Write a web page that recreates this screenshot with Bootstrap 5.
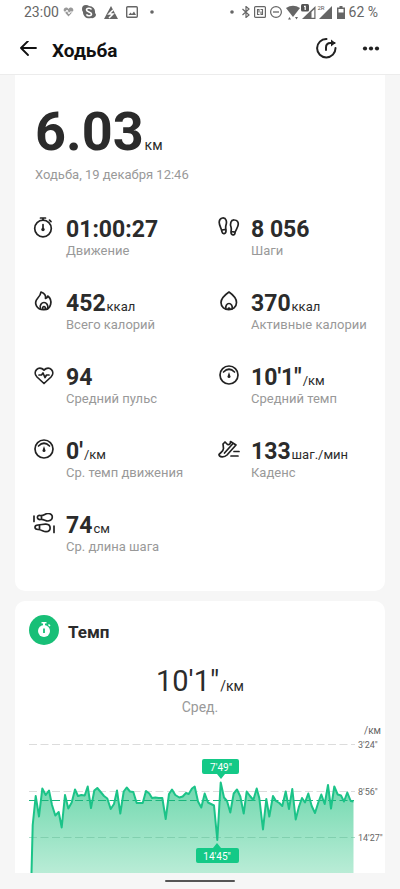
<!DOCTYPE html>
<html lang="ru">
<head>
<meta charset="utf-8">
<meta name="viewport" content="width=device-width, initial-scale=1">
<title>Ходьба</title>
<link href="https://cdn.jsdelivr.net/npm/bootstrap@5.3.0/dist/css/bootstrap.min.css" rel="stylesheet">
<style>
  body { font-family: Roboto, "Noto Sans", sans-serif; background: #f6f6f6; color: #2b2b2b; }
  svg { display: block; flex: none; }
  .line-art { fill: none; stroke: #222; stroke-width: 2; stroke-linecap: round; stroke-linejoin: round; }
  .line-fine { stroke-width: 1.7; }
  .app-top { border-bottom: 1px solid #ececec; }
  .status-bar { height: 24px; padding: 0 22px 0 24px; font-size: 14px; line-height: 24px; color: #666; }
  .title-bar { height: 50px; padding: 0 20px; }
  .title-bar h1 { font-size: 19px; line-height: 24px; padding-top: 4px; margin-left: 15px; color: #111; }
  .page-body { padding: 0 15px; }
  .panel-box { background: #fff; border-radius: 10px; }
  .panel-first { border-radius: 0 0 10px 10px; padding: 29px 0 4px; }
  .summary { padding: 0 20px; }
  .distance { font-size: 54px; line-height: 56px; }
  .distance small, .stat-value small, .pace-value small { font-weight: 400; line-height: 1; margin-left: 1px; }
  .distance small { font-size: 14px; }
  .stat-value small { font-size: 13px; }
  .muted { color: #999; font-size: 13px; line-height: 16px; }
  .summary .muted { padding-top: 7px; }
  .stats { padding-top: 34px; }
  .stat { padding-left: 18px; height: 74px; gap: 11px; }
  .stat-value { font-size: 23px; line-height: 26px; white-space: nowrap; }
  .panel-pace { margin-top: 10px; border-radius: 10px 10px 0 0; overflow: hidden; }
  .pace-head { padding: 14px 14px 0; gap: 9px; }
  .pace-head h2 { font-size: 17px; line-height: 24px; padding-top: 3px; }
  .badge-round { width: 30px; height: 30px; background: #18bf77; }
  .pace-value { font-size: 29px; line-height: 36px; padding-top: 18px; }
  .pace-value small { font-size: 14px; }
  .pace-sub { font-size: 14px; padding-bottom: 10px; }
  .chart text { font-size: 9px; fill: #666; }
  .chart .unit { font-size: 10px; }
  .chart .tip { font-size: 10px; fill: #fff; text-anchor: middle; }
  .home-area { height: 16px; }
  .home-bar { width: 70px; height: 2px; background: #555; }
</style>
<script src="https://cdn.jsdelivr.net/npm/bootstrap@5.3.0/dist/js/bootstrap.bundle.min.js"></script>
</head>
<body>
<header class="app-top bg-white">
  <div class="status-bar d-flex align-items-center justify-content-between">
    <div class="d-flex align-items-center gap-2">
      <div class="d-flex align-items-center gap-1"><span>23:00</span>
      <svg width="11" height="12" viewBox="0 0 11 12"><path d="M5.500 10.500 1 5.500C-.5 2 3.500 0 5.500 3 7.500 0 11.500 2 10 5.500z" fill="#999"/><path d="M0 6h3l1-2 2 4 1-2h4" fill="none" stroke="#fff"/></svg></div>
      <svg width="14" height="14" viewBox="0 0 14 14"><path d="M4 0Q6 0 7 1a6 6 0 0 1 6 7q1 1 1 2a4 4 0 0 1-5 3 6 6 0 0 1-8-6Q0 6 0 4a4 4 0 0 1 4-4z" fill="#666"/><path d="M9.500 4.500C8.500 2.500 4.500 3 4.500 5S9.500 7 9.500 9s-4 2.500-5 .3" fill="none" stroke="#fff" stroke-width="1.600"/></svg>
      <svg width="14" height="13" viewBox="0 0 14 13"><path d="M7 0 14 13H0z" fill="#666"/><path d="M9 4 5 8h4l-4 4" fill="none" stroke="#fff" stroke-width="1.500"/></svg>
      <svg width="12" height="12" viewBox="0 0 12 12"><rect x=".7" y=".7" width="10.600" height="10.600" rx="1" fill="none" stroke="#666" stroke-width="1.400"/><path d="M2.500 9 4.500 6.500 6 8l2-2.500L10 9z" fill="#666"/></svg>
      <svg class="ms-1" width="4" height="4" viewBox="0 0 4 4"><circle cx="2" cy="2" r="1.800" fill="#666"/></svg>
    </div>
    <div class="d-flex align-items-center gap-1">
      <svg class="me-1" width="4" height="4" viewBox="0 0 4 4"><circle cx="2" cy="2" r="1.800" fill="#666"/></svg>
      <svg width="8" height="12" viewBox="0 0 8 12"><path d="M.5 3 7 9 4 11.500V.5L7 3 .5 9" fill="none" stroke="#666" stroke-width="1.200"/></svg>
      <svg width="12" height="12" viewBox="0 0 12 12"><rect x=".6" y=".6" width="10.800" height="10.800" rx="1" fill="none" stroke="#666" stroke-width="1.200"/><path d="M5.500 8.500H3.500v-5h1.500v3M6.500 3.500h2v5H7V5.500" fill="none" stroke="#666" stroke-width="1.100"/></svg>
      <svg width="12" height="12" viewBox="0 0 12 12"><circle cx="6" cy="6" r="5.400" fill="none" stroke="#666" stroke-width="1.200"/><path d="M3 6h6" stroke="#666" stroke-width="1.300"/></svg>
      <svg width="47" height="18" viewBox="0 0 47 18"><path d="M0 5q7-4.500 14 0L7 14z" fill="#666"/><path d="M2 16.500 3.500 14 5 16.500zM9 14h3l-1.500 2.500z" fill="#666"/><path d="M16 16 29.500 3v13z" fill="#666"/><path d="M25.500 9 28.300 6.200v8.500h-2.800z" fill="#fff"/><rect x="15" y="1" width="8" height="7.500" rx="1.500" fill="#555"/><path d="M18 3.300h1.200V7" fill="none" stroke="#fff" stroke-width="1.200"/><path d="M33 16 46 3v13z" fill="#666"/><text x="31.500" y="6.500" font-size="6" fill="#555">2R</text></svg>
      <svg width="8" height="13" viewBox="0 0 8 13"><path d="M2.500 0h3v1.500H8V13H0V1.500h2.500z" fill="#666"/><path d="M1.500 3h5v3.500h-5z" fill="#fff"/></svg>
      <span>62 %</span>
    </div>
  </div>
  <div class="title-bar d-flex align-items-center">
    <button type="button" class="btn p-0 border-0" aria-label="Назад"><svg width="17" height="16" viewBox="0 0 17 16"><path d="M16 7H1.500M8 0 1 7l7 7" fill="none" stroke="#111" stroke-width="1.800" stroke-linecap="round" stroke-linejoin="round"/></svg></button>
    <h1 class="fw-bold mb-0 flex-grow-1">Ходьба</h1>
    <button type="button" class="btn p-0 border-0 me-4" aria-label="Поделиться"><svg width="22" height="22" viewBox="0 0 22 22"><path d="M10.500 1A9.200 9.200 0 1 0 19.500 10M10 12V9.500q0-4.500 4.500-4.500h4" fill="none" stroke="#222" stroke-width="2" stroke-linecap="round"/><path d="m15 1.500 4.500 3.500-4.500 3.500z" fill="#222"/></svg></button>
    <button type="button" class="btn p-0 border-0" aria-label="Ещё"><svg width="18" height="6" viewBox="0 0 18 6"><g fill="#222"><circle cx="3" cy="2.500" r="2.100"/><circle cx="9" cy="2.500" r="2.100"/><circle cx="15" cy="2.500" r="2.100"/></g></svg></button>
  </div>
</header>

<main class="page-body">
  <section class="panel-box panel-first">
    <div class="summary">
      <div class="distance fw-bold">6.03<small>км</small></div>
      <div class="muted">Ходьба, 19 декабря 12:46</div>
    </div>
    <div class="stats row g-0">
      <div class="col-6"><div class="stat d-flex">
        <svg width="22" height="22" viewBox="0 0 22 22"><g class="line-art line-fine"><circle cx="10" cy="11.500" r="8.300"/><path d="M7.500 1h5M10 1v2M16.500 3.200l1.500 1.500M10 7.500V12"/></g><circle cx="10" cy="12.500" r="1.700" fill="#222"/></svg>
        <div><div class="stat-value fw-bold">01:00:27</div><div class="muted">Движение</div></div></div></div>
      <div class="col-6"><div class="stat d-flex">
        <svg width="22" height="22" viewBox="0 0 22 22"><g class="line-art line-fine"><path d="M4.500 1C8.500.5 9 5 8 8c-.8 2.500 0 4 0 6 0 3-3.500 3.500-4 .8C3.700 12 1 8.500 1.200 5 1.400 2.500 2.800 1.200 4.500 1zM4 13l4-.7"/><path d="M16.500 3c-4-.5-4.500 4-3.500 7 .8 2.500 0 4 0 5 0 3.500 3.500 4 4 1 .3-3 3.300-5.500 3.300-9 0-2.500-1.700-3.800-3.800-4zM13 14.500l4 .7"/></g></svg>
        <div><div class="stat-value fw-bold">8 056</div><div class="muted">Шаги</div></div></div></div>
      <div class="col-6"><div class="stat d-flex">
        <svg width="22" height="22" viewBox="0 0 22 22"><g class="line-art line-fine"><path d="M8 1c4 1.500 5 4 4.500 6.500 1.500-.5 2-1.500 2.200-2.500C20 9 18.500 18.500 11 18.700 3.500 19 .5 12 4.500 7.500 6.500 5.300 7.800 3.500 8 1z"/><path d="M7.500 18c-1.500-4 1.500-6.500 3.500-6.500s5 2.500 3.500 6.500M9.700 18v-1.500q1.300-2 2.600 0V18"/></g></svg>
        <div><div class="stat-value fw-bold">452<small>ккал</small></div><div class="muted">Всего калорий</div></div></div></div>
      <div class="col-6"><div class="stat d-flex">
        <svg width="22" height="22" viewBox="0 0 22 22"><g class="line-art line-fine"><path d="M11 1C6 4.500 3 8 3 11.500c0 9.500 15.500 9.500 15.500 0C18.500 8 16 4.500 11 1z"/><path d="M8 18c-1-3 1-5.500 3-5.500s4 2.500 3 5.500M10 18q1-2 2 0"/></g></svg>
        <div><div class="stat-value fw-bold">370<small>ккал</small></div><div class="muted">Активные калории</div></div></div></div>
      <div class="col-6"><div class="stat d-flex">
        <svg width="22" height="22" viewBox="0 0 22 22"><g class="line-art line-fine"><path d="M11 18.500 4 12C-1 6.500 5.500 0 11 5 16.500 0 23 6.500 18 12z"/><path d="M6 10h2.500l1.500-2 2 4.500 1.500-2.500H16"/></g></svg>
        <div><div class="stat-value fw-bold">94</div><div class="muted">Средний пульс</div></div></div></div>
      <div class="col-6"><div class="stat d-flex">
        <svg width="22" height="22" viewBox="0 0 22 22"><g class="line-art line-fine"><circle cx="11" cy="10" r="9"/><path d="M5.500 7q5.500-5.500 11 0"/></g><path d="m11 7 1.500 4.500a1.500 1.500 0 1 1-3 0z" fill="#222"/></svg>
        <div><div class="stat-value fw-bold">10'1"<small>/км</small></div><div class="muted">Средний темп</div></div></div></div>
      <div class="col-6"><div class="stat d-flex">
        <svg width="22" height="22" viewBox="0 0 22 22"><g class="line-art line-fine"><circle cx="11" cy="10" r="9"/><path d="M5.500 7q5.500-5.500 11 0"/></g><path d="m11 7 1.500 4.500a1.500 1.500 0 1 1-3 0z" fill="#222"/></svg>
        <div><div class="stat-value fw-bold">0'<small>/км</small></div><div class="muted">Ср. темп движения</div></div></div></div>
      <div class="col-6"><div class="stat d-flex">
        <svg width="22" height="22" viewBox="0 0 22 22"><g class="line-art line-fine"><path d="M1 15.500c1-1.500 4.500-3 4.500-6L5 5l2-2 2.500 2.500c2 .5 3-.5 3-3L18 6 9 16c-2.500 2.500-8 2.500-8-.5zM15 4.500 6.500 14"/><path d="M16 12.500h5M13 17h7"/></g></svg>
        <div><div class="stat-value fw-bold">133<small>шаг./мин</small></div><div class="muted">Каденс</div></div></div></div>
      <div class="col-6"><div class="stat d-flex">
        <svg width="22" height="22" viewBox="0 0 22 22"><g class="line-art line-fine"><path d="M7 2.500c4 .5 5-2 8-2 6 0 5.500 7 0 7.500-3 0-4-2-7.500-1.500C3.500 7 3.500 2 7 2.500zM8.500 2.700v3.600M1 3v5.500"/><path d="M5 12c4-.2 5-1 8-.8 5.500.3 5.500 7 0 7.500-3 0-4-2-8-2.200-4-.2-4-4.300 0-4.500zM6.500 12v4.500M21 13v6.500"/></g></svg>
        <div><div class="stat-value fw-bold">74<small>см</small></div><div class="muted">Ср. длина шага</div></div></div></div>
    </div>
  </section>

  <section class="panel-box panel-pace">
    <div class="pace-head d-flex align-items-center">
      <span class="badge-round rounded-circle d-flex align-items-center justify-content-center"><svg width="14" height="16" viewBox="0 0 14 16"><path d="M4.500 0h5v1.500H8V4H6V1.500H4.500z" fill="#fff"/><circle cx="7" cy="9" r="6" fill="#fff"/><path d="M11.500 2.500 13 4" stroke="#fff" stroke-width="1.500"/><path d="M7 6.500v4.500" stroke="#18bf77" stroke-width="1.800"/></svg></span>
      <h2 class="fw-bold mb-0">Темп</h2>
    </div>
    <div class="pace-value text-center">10'1"<small>/км</small></div>
    <div class="muted pace-sub text-center">Сред.</div>
    <svg class="chart w-100" viewBox="15 725 370 148" role="img" aria-label="График темпа">
      <defs><linearGradient id="fillGreen" x1="0" y1="0" x2="0" y2="1"><stop offset="0" stop-color="#70d8ae"/><stop offset="1" stop-color="#b9ecd6"/></linearGradient></defs>
      <path d="M29 744.500H355M29 791.500H355" stroke="#dcdcdc" stroke-dasharray="8 3.500"/>
      <path fill="url(#fillGreen)" d="M31.500 873 32.700 825 35.700 796 39 816.500 42.300 788.500 45.700 795 49 790.500 52 805 55.300 815.500 58.700 812 61.700 827.500 65 795 68.300 808.500 71.700 802.500 75 789.500 78 796 81.300 795 84.700 795.500 87.700 786.500 91 808 94.300 790.500 97.300 788 100.700 792 104 796 107.300 798.500 110.700 809 114 804 117 790.500 120.300 813.500 123.700 791.500 126.700 787.500 130 791.500 133.300 792 136.700 803 142.700 803 146 791 149.300 793.500 152 798 155.300 797.500 158.700 798 162.300 798 165.700 819 169 794 172 789.500 175.300 795 179.300 797.500 182.700 796.500 186 793 188.700 794 192 788.500 194.700 786.500 198 801.500 201.300 807.500 204.700 793.500 208 802.500 214 805.500 217.300 840 220.700 782.500 224 797.500 227 801 230.300 812.500 233.700 793.500 237 789.500 240.300 796.500 243.700 813.500 246.700 791.500 250 796 253.300 800 256.700 788.500 259.300 798 263 829.500 266.300 799 269.300 816.500 273 796 276 801 279.300 803 282.300 806 285.700 791.500 289 809 292.300 789 295.700 819.500 299 806.500 302 798 305 802.500 308.300 793.500 311.700 806 315 813 318.300 802.500 321.300 794.500 324.700 804 328 785 331 808.500 334.300 786.500 337.700 794.500 341 795.500 344 801.500 347.300 792.500 350.700 801 353.500 801.500V873z"/>
      <path d="M29 837.500H355" stroke="#6bbf9c" stroke-opacity=".55" stroke-dasharray="8 3.500"/>
      <path d="M29 800.500H354" stroke="#19b57c" stroke-dasharray="8 3.500"/>
      <path fill="none" stroke="#1bc388" stroke-width="2" stroke-linejoin="round" d="M31.500 873 32.700 825 35.700 796 39 816.500 42.300 788.500 45.700 795 49 790.500 52 805 55.300 815.500 58.700 812 61.700 827.500 65 795 68.300 808.500 71.700 802.500 75 789.500 78 796 81.300 795 84.700 795.500 87.700 786.500 91 808 94.300 790.500 97.300 788 100.700 792 104 796 107.300 798.500 110.700 809 114 804 117 790.500 120.300 813.500 123.700 791.500 126.700 787.500 130 791.500 133.300 792 136.700 803 142.700 803 146 791 149.300 793.500 152 798 155.300 797.500 158.700 798 162.300 798 165.700 819 169 794 172 789.500 175.300 795 179.300 797.500 182.700 796.500 186 793 188.700 794 192 788.500 194.700 786.500 198 801.500 201.300 807.500 204.700 793.500 208 802.500 214 805.500 217.300 840 220.700 782.500 224 797.500 227 801 230.300 812.500 233.700 793.500 237 789.500 240.300 796.500 243.700 813.500 246.700 791.500 250 796 253.300 800 256.700 788.500 259.300 798 263 829.500 266.300 799 269.300 816.500 273 796 276 801 279.300 803 282.300 806 285.700 791.500 289 809 292.300 789 295.700 819.500 299 806.500 302 798 305 802.500 308.300 793.500 311.700 806 315 813 318.300 802.500 321.300 794.500 324.700 804 328 785 331 808.500 334.300 786.500 337.700 794.500 341 795.500 344 801.500 347.300 792.500 350.700 801 353.500 801.500"/>
      <path fill="#14c987" d="M204 759h33q2 0 2 2v11q0 2-2 2h-12l-4 5-4-5h-13q-2 0-2-2v-11q0-2 2-2z"/>
      <path fill="#14c987" d="M198 848h15l4-5 4 5h16q2 0 2 2v11q0 2-2 2h-39q-2 0-2-2v-11q0-2 2-2z"/>
      <text class="tip" x="221" y="771">7'49"</text>
      <text class="tip" x="217" y="860">14'45"</text>
      <text class="unit" x="364" y="734">/км</text>
      <text x="358" y="748">3'24"</text>
      <text x="358" y="795">8'56"</text>
      <text x="358" y="841">14'27"</text>
    </svg>
  </section>
</main>
<footer class="home-area d-flex align-items-center justify-content-center"><div class="home-bar rounded-pill"></div></footer>
</body>
</html>
